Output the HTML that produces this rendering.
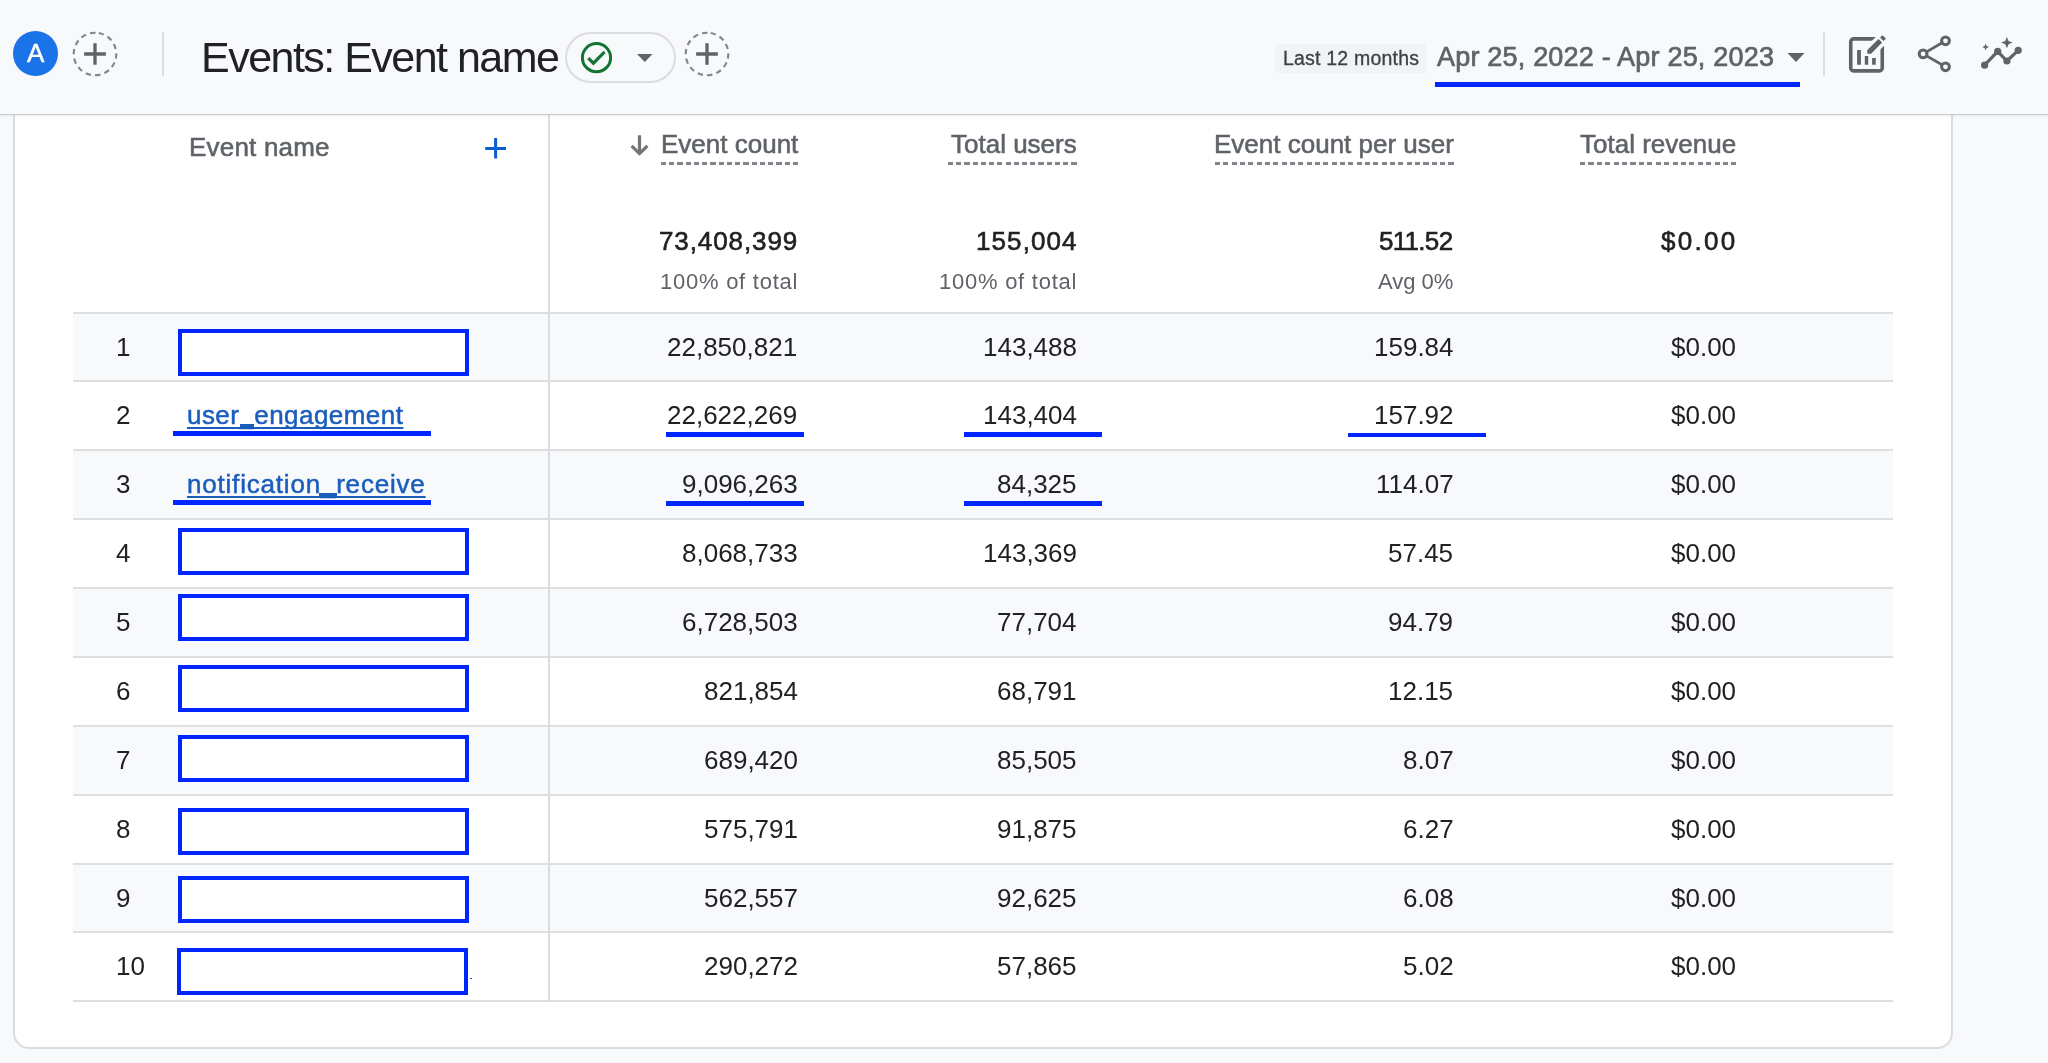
<!DOCTYPE html>
<html><head><meta charset="utf-8"><style>
html,body{margin:0;padding:0;}
body{width:2048px;height:1063px;overflow:hidden;position:relative;background:#f8f9fa;font-family:"Liberation Sans", sans-serif;}
.t{position:absolute;white-space:nowrap;line-height:1;will-change:transform;}
</style></head><body>
<div style="position:absolute;left:13px;top:-40px;width:1936px;height:1085px;border:2px solid #dadce0;border-radius:16px;background:#fff"></div>
<div style="position:absolute;left:73.00px;top:312.60px;width:1820.00px;height:68.87px;background:#f8f9fa;"></div>
<div style="position:absolute;left:73.00px;top:450.34px;width:1820.00px;height:68.87px;background:#f8f9fa;"></div>
<div style="position:absolute;left:73.00px;top:588.08px;width:1820.00px;height:68.87px;background:#f8f9fa;"></div>
<div style="position:absolute;left:73.00px;top:725.82px;width:1820.00px;height:68.87px;background:#f8f9fa;"></div>
<div style="position:absolute;left:73.00px;top:863.56px;width:1820.00px;height:68.87px;background:#f8f9fa;"></div>
<div style="position:absolute;left:73.00px;top:311.60px;width:1820.00px;height:2.00px;background:#dedfe1;"></div>
<div style="position:absolute;left:73.00px;top:380.47px;width:1820.00px;height:2.00px;background:#dedfe1;"></div>
<div style="position:absolute;left:73.00px;top:449.34px;width:1820.00px;height:2.00px;background:#dedfe1;"></div>
<div style="position:absolute;left:73.00px;top:518.21px;width:1820.00px;height:2.00px;background:#dedfe1;"></div>
<div style="position:absolute;left:73.00px;top:587.08px;width:1820.00px;height:2.00px;background:#dedfe1;"></div>
<div style="position:absolute;left:73.00px;top:655.95px;width:1820.00px;height:2.00px;background:#dedfe1;"></div>
<div style="position:absolute;left:73.00px;top:724.82px;width:1820.00px;height:2.00px;background:#dedfe1;"></div>
<div style="position:absolute;left:73.00px;top:793.69px;width:1820.00px;height:2.00px;background:#dedfe1;"></div>
<div style="position:absolute;left:73.00px;top:862.56px;width:1820.00px;height:2.00px;background:#dedfe1;"></div>
<div style="position:absolute;left:73.00px;top:931.43px;width:1820.00px;height:2.00px;background:#dedfe1;"></div>
<div style="position:absolute;left:73.00px;top:1000.30px;width:1820.00px;height:2.00px;background:#dedfe1;"></div>
<div style="position:absolute;left:548.00px;top:114.00px;width:2.00px;height:888.00px;background:#dadce0;"></div>
<div class="t" style="left:116.00px;top:333.59px;font-size:26px;color:#202124;font-weight:400;">1</div>
<div style="position:absolute;left:178px;top:328.5px;width:283px;height:39px;border:4.5px solid #0026ff;background:#fff"></div>
<div class="t" style="right:1250.50px;top:333.59px;font-size:26px;color:#202124;font-weight:400;">22,850,821</div>
<div class="t" style="right:971.00px;top:333.59px;font-size:26px;color:#202124;font-weight:400;">143,488</div>
<div class="t" style="right:594.50px;top:333.59px;font-size:26px;color:#202124;font-weight:400;">159.84</div>
<div class="t" style="right:312.00px;top:333.59px;font-size:26px;color:#202124;font-weight:400;">$0.00</div>
<div class="t" style="left:116.00px;top:402.46px;font-size:26px;color:#202124;font-weight:400;">2</div>
<div class="t" style="left:186.50px;top:402.46px;font-size:26px;color:#1a5dbd;font-weight:400;letter-spacing:0.45px;-webkit-text-stroke:0.5px #1a5dbd;text-decoration:underline;text-decoration-skip-ink:none;text-decoration-thickness:1.5px;text-underline-offset:3px;">user_engagement</div>
<div style="position:absolute;left:172.50px;top:431.47px;width:258.00px;height:5.00px;background:#0026ff;"></div>
<div class="t" style="right:1250.50px;top:402.46px;font-size:26px;color:#202124;font-weight:400;">22,622,269</div>
<div class="t" style="right:971.00px;top:402.46px;font-size:26px;color:#202124;font-weight:400;">143,404</div>
<div class="t" style="right:594.50px;top:402.46px;font-size:26px;color:#202124;font-weight:400;">157.92</div>
<div class="t" style="right:312.00px;top:402.46px;font-size:26px;color:#202124;font-weight:400;">$0.00</div>
<div class="t" style="left:116.00px;top:471.33px;font-size:26px;color:#202124;font-weight:400;">3</div>
<div class="t" style="left:186.50px;top:471.33px;font-size:26px;color:#1a5dbd;font-weight:400;letter-spacing:0.8px;-webkit-text-stroke:0.5px #1a5dbd;text-decoration:underline;text-decoration-skip-ink:none;text-decoration-thickness:1.5px;text-underline-offset:3px;">notification_receive</div>
<div style="position:absolute;left:172.50px;top:500.34px;width:258.00px;height:5.00px;background:#0026ff;"></div>
<div class="t" style="right:1250.50px;top:471.33px;font-size:26px;color:#202124;font-weight:400;">9,096,263</div>
<div class="t" style="right:971.00px;top:471.33px;font-size:26px;color:#202124;font-weight:400;">84,325</div>
<div class="t" style="right:594.50px;top:471.33px;font-size:26px;color:#202124;font-weight:400;">114.07</div>
<div class="t" style="right:312.00px;top:471.33px;font-size:26px;color:#202124;font-weight:400;">$0.00</div>
<div class="t" style="left:116.00px;top:540.20px;font-size:26px;color:#202124;font-weight:400;">4</div>
<div style="position:absolute;left:178px;top:527.6px;width:283px;height:39px;border:4.5px solid #0026ff;background:#fff"></div>
<div class="t" style="right:1250.50px;top:540.20px;font-size:26px;color:#202124;font-weight:400;">8,068,733</div>
<div class="t" style="right:971.00px;top:540.20px;font-size:26px;color:#202124;font-weight:400;">143,369</div>
<div class="t" style="right:594.50px;top:540.20px;font-size:26px;color:#202124;font-weight:400;">57.45</div>
<div class="t" style="right:312.00px;top:540.20px;font-size:26px;color:#202124;font-weight:400;">$0.00</div>
<div class="t" style="left:116.00px;top:609.07px;font-size:26px;color:#202124;font-weight:400;">5</div>
<div style="position:absolute;left:178px;top:594.0px;width:283px;height:39px;border:4.5px solid #0026ff;background:#fff"></div>
<div class="t" style="right:1250.50px;top:609.07px;font-size:26px;color:#202124;font-weight:400;">6,728,503</div>
<div class="t" style="right:971.00px;top:609.07px;font-size:26px;color:#202124;font-weight:400;">77,704</div>
<div class="t" style="right:594.50px;top:609.07px;font-size:26px;color:#202124;font-weight:400;">94.79</div>
<div class="t" style="right:312.00px;top:609.07px;font-size:26px;color:#202124;font-weight:400;">$0.00</div>
<div class="t" style="left:116.00px;top:677.94px;font-size:26px;color:#202124;font-weight:400;">6</div>
<div style="position:absolute;left:178px;top:664.5px;width:283px;height:39px;border:4.5px solid #0026ff;background:#fff"></div>
<div class="t" style="right:1250.50px;top:677.94px;font-size:26px;color:#202124;font-weight:400;">821,854</div>
<div class="t" style="right:971.00px;top:677.94px;font-size:26px;color:#202124;font-weight:400;">68,791</div>
<div class="t" style="right:594.50px;top:677.94px;font-size:26px;color:#202124;font-weight:400;">12.15</div>
<div class="t" style="right:312.00px;top:677.94px;font-size:26px;color:#202124;font-weight:400;">$0.00</div>
<div class="t" style="left:116.00px;top:746.81px;font-size:26px;color:#202124;font-weight:400;">7</div>
<div style="position:absolute;left:178px;top:735.0px;width:283px;height:39px;border:4.5px solid #0026ff;background:#fff"></div>
<div class="t" style="right:1250.50px;top:746.81px;font-size:26px;color:#202124;font-weight:400;">689,420</div>
<div class="t" style="right:971.00px;top:746.81px;font-size:26px;color:#202124;font-weight:400;">85,505</div>
<div class="t" style="right:594.50px;top:746.81px;font-size:26px;color:#202124;font-weight:400;">8.07</div>
<div class="t" style="right:312.00px;top:746.81px;font-size:26px;color:#202124;font-weight:400;">$0.00</div>
<div class="t" style="left:116.00px;top:815.68px;font-size:26px;color:#202124;font-weight:400;">8</div>
<div style="position:absolute;left:178px;top:808.0px;width:283px;height:39px;border:4.5px solid #0026ff;background:#fff"></div>
<div class="t" style="right:1250.50px;top:815.68px;font-size:26px;color:#202124;font-weight:400;">575,791</div>
<div class="t" style="right:971.00px;top:815.68px;font-size:26px;color:#202124;font-weight:400;">91,875</div>
<div class="t" style="right:594.50px;top:815.68px;font-size:26px;color:#202124;font-weight:400;">6.27</div>
<div class="t" style="right:312.00px;top:815.68px;font-size:26px;color:#202124;font-weight:400;">$0.00</div>
<div class="t" style="left:116.00px;top:884.55px;font-size:26px;color:#202124;font-weight:400;">9</div>
<div style="position:absolute;left:178px;top:875.9px;width:283px;height:39px;border:4.5px solid #0026ff;background:#fff"></div>
<div class="t" style="right:1250.50px;top:884.55px;font-size:26px;color:#202124;font-weight:400;">562,557</div>
<div class="t" style="right:971.00px;top:884.55px;font-size:26px;color:#202124;font-weight:400;">92,625</div>
<div class="t" style="right:594.50px;top:884.55px;font-size:26px;color:#202124;font-weight:400;">6.08</div>
<div class="t" style="right:312.00px;top:884.55px;font-size:26px;color:#202124;font-weight:400;">$0.00</div>
<div class="t" style="left:116.00px;top:953.42px;font-size:26px;color:#202124;font-weight:400;">10</div>
<div style="position:absolute;left:177px;top:947.5px;width:283px;height:39px;border:4.5px solid #0026ff;background:#fff"></div>
<div class="t" style="right:1250.50px;top:953.42px;font-size:26px;color:#202124;font-weight:400;">290,272</div>
<div class="t" style="right:971.00px;top:953.42px;font-size:26px;color:#202124;font-weight:400;">57,865</div>
<div class="t" style="right:594.50px;top:953.42px;font-size:26px;color:#202124;font-weight:400;">5.02</div>
<div class="t" style="right:312.00px;top:953.42px;font-size:26px;color:#202124;font-weight:400;">$0.00</div>
<div style="position:absolute;left:239.50px;top:424.30px;width:14.50px;height:3.20px;background:#1a5dbd;"></div>
<div style="position:absolute;left:319.00px;top:493.20px;width:18.00px;height:3.20px;background:#1a5dbd;"></div>
<div style="position:absolute;left:469.50px;top:977.60px;width:2.30px;height:1.60px;background:#1a5dbd;"></div>
<div style="position:absolute;left:666.00px;top:432.47px;width:138.00px;height:4.50px;background:#0026ff;"></div>
<div style="position:absolute;left:963.50px;top:432.47px;width:138.50px;height:4.50px;background:#0026ff;"></div>
<div style="position:absolute;left:666.00px;top:501.34px;width:138.00px;height:4.50px;background:#0026ff;"></div>
<div style="position:absolute;left:963.50px;top:501.34px;width:138.50px;height:4.50px;background:#0026ff;"></div>
<div style="position:absolute;left:1347.50px;top:432.97px;width:138.00px;height:4.50px;background:#0026ff;"></div>
<div class="t" style="left:188.50px;top:134.39px;font-size:26px;color:#5f6368;font-weight:400;letter-spacing:0.2px;-webkit-text-stroke:0.55px #5f6368;">Event name</div>
<svg style="position:absolute;left:484px;top:136.5px" width="23" height="23" viewBox="0 0 23 23"><path d="M11.6 1v20.6M1.2 11.4h20.8" stroke="#0b5cd5" stroke-width="3"/></svg>
<svg style="position:absolute;left:629px;top:134px" width="21" height="23" viewBox="0 0 21 23"><path d="M10.5 1.3v18.5M2.6 11.8l7.9 7.9 7.9-7.9" fill="none" stroke="#757575" stroke-width="3.2" stroke-linejoin="round"/></svg>
<div class="t" style="right:1250.00px;top:130.79px;font-size:26px;color:#5f6368;font-weight:400;-webkit-text-stroke:0.55px #5f6368;">Event count</div>
<div style="position:absolute;left:661.00px;top:162.00px;width:137.00px;height:3.00px;background:repeating-linear-gradient(90deg,#80868b 0 5.1px,transparent 5.1px 8.244px);"></div>
<div class="t" style="right:971.50px;top:130.79px;font-size:26px;color:#5f6368;font-weight:400;-webkit-text-stroke:0.55px #5f6368;">Total users</div>
<div style="position:absolute;left:948.00px;top:162.00px;width:128.50px;height:3.00px;background:repeating-linear-gradient(90deg,#80868b 0 5.1px,transparent 5.1px 8.227px);"></div>
<div class="t" style="right:594.50px;top:130.79px;font-size:26px;color:#5f6368;font-weight:400;-webkit-text-stroke:0.55px #5f6368;">Event count per user</div>
<div style="position:absolute;left:1215.00px;top:162.00px;width:238.50px;height:3.00px;background:repeating-linear-gradient(90deg,#80868b 0 5.1px,transparent 5.1px 8.336px);"></div>
<div class="t" style="right:312.00px;top:130.79px;font-size:26px;color:#5f6368;font-weight:400;-webkit-text-stroke:0.55px #5f6368;">Total revenue</div>
<div style="position:absolute;left:1579.50px;top:162.00px;width:156.50px;height:3.00px;background:repeating-linear-gradient(90deg,#80868b 0 5.1px,transparent 5.1px 8.411px);"></div>
<div class="t" style="right:1249.60px;top:227.69px;font-size:26px;color:#202124;font-weight:400;letter-spacing:0.9px;-webkit-text-stroke:0.6px #202124;">73,408,399</div>
<div class="t" style="right:970.40px;top:227.69px;font-size:26px;color:#202124;font-weight:400;letter-spacing:1.1px;-webkit-text-stroke:0.6px #202124;">155,004</div>
<div class="t" style="right:595.70px;top:227.69px;font-size:26px;color:#202124;font-weight:400;letter-spacing:-0.7px;-webkit-text-stroke:0.6px #202124;">511.52</div>
<div class="t" style="right:310.20px;top:227.69px;font-size:26px;color:#202124;font-weight:400;letter-spacing:2.3px;-webkit-text-stroke:0.6px #202124;">$0.00</div>
<div class="t" style="right:1249.75px;top:270.98px;font-size:22px;color:#5f6368;font-weight:400;letter-spacing:0.75px;">100% of total</div>
<div class="t" style="right:970.75px;top:270.98px;font-size:22px;color:#5f6368;font-weight:400;letter-spacing:0.75px;">100% of total</div>
<div class="t" style="right:595.00px;top:270.98px;font-size:22px;color:#5f6368;font-weight:400;">Avg 0%</div>
<div style="position:absolute;left:0;top:0;width:2048px;height:113.5px;background:#f8f9fa;border-bottom:1.5px solid #c9cacc;box-shadow:0 1px 2px rgba(0,0,0,0.07)"></div>
<div style="position:absolute;left:13px;top:31.2px;width:44.8px;height:44.8px;border-radius:50%;background:#1a73e8"></div>
<div class="t" style="left:26.60px;top:40.39px;font-size:26px;color:#fff;font-weight:400;-webkit-text-stroke:0.45px #fff;">A</div>
<svg style="position:absolute;left:70.90px;top:30.00px" width="48" height="48" viewBox="0 0 48 48"><circle cx="24" cy="24" r="21.3" fill="none" stroke="#80868b" stroke-width="2.1" stroke-dasharray="5.4 4.16" transform="rotate(-80 24 24)"/><path d="M24 13.15v21.7M13.15 24h21.7" stroke="#5f6368" stroke-width="3.3"/></svg>
<div style="position:absolute;left:162.00px;top:32.00px;width:2.00px;height:44.00px;background:#dadce0;"></div>
<div class="t" style="left:200.50px;top:35.90px;font-size:43px;color:#202124;font-weight:400;letter-spacing:-1.52px;">Events: Event name</div>
<div style="position:absolute;left:565px;top:32px;width:107px;height:47px;border:2px solid #dadce0;border-radius:26px"></div>
<svg style="position:absolute;left:572px;top:34px" width="48" height="48" viewBox="0 0 48 48"><circle cx="24.5" cy="23.7" r="14.1" fill="none" stroke="#137333" stroke-width="3"/><path d="M16.3 24.1l5.1 5.1 11.2-11.3" fill="none" stroke="#137333" stroke-width="3.1"/></svg>
<svg style="position:absolute;left:636px;top:53px" width="18" height="10" viewBox="0 0 18 10"><path d="M1 1h15.5l-7.75 8z" fill="#5f6368"/></svg>
<svg style="position:absolute;left:682.50px;top:30.00px" width="48" height="48" viewBox="0 0 48 48"><circle cx="24" cy="24" r="21.3" fill="none" stroke="#80868b" stroke-width="2.1" stroke-dasharray="5.4 4.16" transform="rotate(-80 24 24)"/><path d="M24 13.15v21.7M13.15 24h21.7" stroke="#5f6368" stroke-width="3.3"/></svg>
<div style="position:absolute;left:1275.00px;top:44.00px;width:151.00px;height:29.00px;background:#f1f3f4;"></div>
<div class="t" style="left:1282.50px;top:48.89px;font-size:19.5px;color:#3c4043;font-weight:400;letter-spacing:0.2px;-webkit-text-stroke:0.3px #3c4043;">Last 12 months</div>
<div class="t" style="left:1437.00px;top:44.04px;font-size:27px;color:#5f6368;font-weight:400;letter-spacing:0.2px;-webkit-text-stroke:0.7px #5f6368;">Apr 25, 2022 - Apr 25, 2023</div>
<svg style="position:absolute;left:1786px;top:52px" width="20" height="11" viewBox="0 0 20 11"><path d="M1.5 1h17l-8.5 9z" fill="#5f6368"/></svg>
<div style="position:absolute;left:1435.00px;top:82.00px;width:365.00px;height:4.70px;background:#0026ff;"></div>
<div style="position:absolute;left:1822.50px;top:32.00px;width:2.00px;height:44.00px;background:#dadce0;"></div>
<svg style="position:absolute;left:1844px;top:30px" width="48" height="48" viewBox="0 0 48 48"><rect x="6.75" y="8.9" width="31.5" height="32" rx="2.8" fill="none" stroke="#5f6368" stroke-width="3.6"/><path d="M30 17.2L43.5 3.7" stroke="#f8f9fa" stroke-width="12"/><path d="M23.3 19.9V23.7H27.1L38.1 12.4L34.5 9z" fill="#5f6368"/><path d="M36.1 7.4L38.4 5.2L42 8.6L39.5 11.1z" fill="#5f6368"/><path d="M13.1 20.1h3.8v14.7h-3.8zM20.8 26.1h3.4v8.7h-3.4zM28.1 27.9h3.7v6.9h-3.7z" fill="#5f6368"/></svg>
<svg style="position:absolute;left:1910px;top:30px" width="48" height="48" viewBox="0 0 48 48"><path d="M13.1 23.9L35.5 10.8M13.1 23.9L35.5 36.8" stroke="#5f6368" stroke-width="2.8"/><circle cx="35.5" cy="10.8" r="3.9" fill="#f8f9fa" stroke="#5f6368" stroke-width="3"/><circle cx="13.1" cy="23.9" r="3.9" fill="#f8f9fa" stroke="#5f6368" stroke-width="3"/><circle cx="35.5" cy="36.8" r="3.9" fill="#f8f9fa" stroke="#5f6368" stroke-width="3"/></svg>
<svg style="position:absolute;left:1975px;top:30px" width="56" height="48" viewBox="0 0 56 48"><path d="M9.6 35.2L22.7 21.4L31.9 31L43.2 20.3" fill="none" stroke="#5f6368" stroke-width="3.2"/><circle cx="9.6" cy="35.2" r="3.6" fill="#5f6368"/><circle cx="22.7" cy="21.4" r="3.6" fill="#5f6368"/><circle cx="31.9" cy="31" r="3.6" fill="#5f6368"/><circle cx="43.2" cy="20.3" r="3.6" fill="#5f6368"/><path d="M31.9 7l1.6 4 4 1.6-4 1.6-1.6 4-1.6-4-4-1.6 4-1.6z" fill="#5f6368"/><path d="M10.6 13.5l1 2.5 2.5 1-2.5 1-1 2.5-1-2.5-2.5-1 2.5-1z" fill="#5f6368"/></svg>
</body></html>
